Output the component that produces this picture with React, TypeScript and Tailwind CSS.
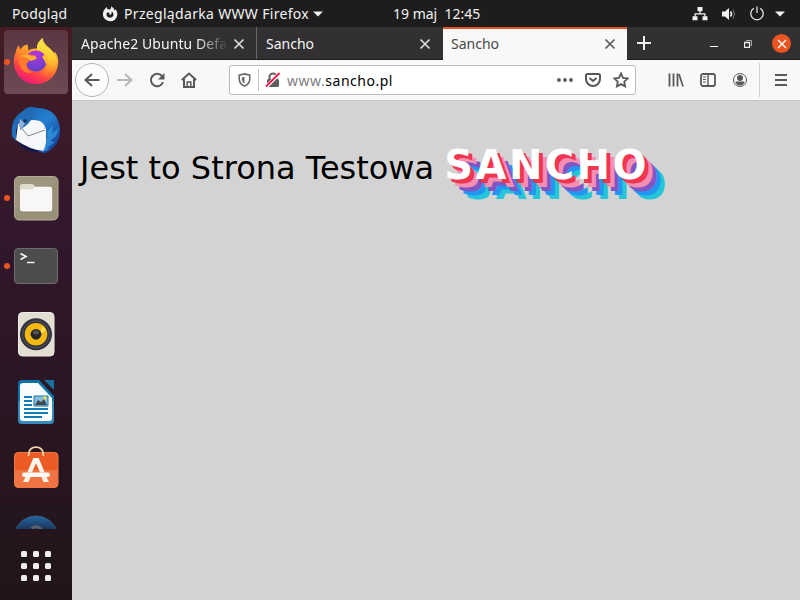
import React from "react";

const ui = "font-['Noto_Sans','Open_Sans',sans-serif]";

function Cross({ className = "" }: { className?: string }) {
  return (
    <svg viewBox="0 0 12 12" className={`size-3 shrink-0 ${className}`} fill="none" stroke="currentColor" strokeWidth="1.7">
      <path d="M1.5 1.5l9 9M10.5 1.5l-9 9" />
    </svg>
  );
}

function TopBar() {
  return (
    <header className="flex h-[27px] w-full shrink-0 items-center bg-[#1d1d1d] text-[14px] leading-[27px] whitespace-nowrap text-[#f2f2f2]">
      <div className="w-[103px] pl-3 tracking-[0.15px]">Podgląd</div>
      <svg viewBox="0 0 16 16" className="-ml-px size-4 shrink-0" fill="#f2f2f2">
        <path fillRule="evenodd" d="M4.6 1 2.9 2.900A7.300 7.300 0 1 0 13.600 3.200L12.800 4.500A7 7 0 0 0 9 .2C9.500 1.500 8.800 2.500 8.200 3.400L5.500 3.200ZM5 6.500l3 .2-1.300 1.500 1.600.6c1.300-.5 1.600-1.700 1.200-3.300 1.800 1 2.500 2.900 1.600 4.500-1.300 2.200-4.500 2.300-6 .3-.8-1.200-.8-2.600-.1-3.800Z" />
      </svg>
      <div className="w-[184px] pl-[6px] tracking-[0.32px]">Przeglądarka WWW Firefox</div>
      <svg viewBox="0 0 10 6" className="ml-[11px] h-[6px] w-[10px] shrink-0" fill="#f2f2f2"><path d="M0 .5h10L5 5.5z" /></svg>
      <div className="ml-[70px] w-[299px] whitespace-pre">19 maj  12:45</div>
      <svg viewBox="0 0 16 14" className="h-[14px] w-4 shrink-0" fill="#f2f2f2">
        <path d="M5.5 0h5v4.2H8.6v2h4.9v3H15.5v4h-5v-4h1.800V7.4H3.7v1.8H5.500v4H.5v-4h2v-3h4.900v-2H5.5z" />
      </svg>
      <svg viewBox="0 0 16 16" className="ml-[13px] size-4 shrink-0" fill="none" stroke="#f2f2f2">
        <path d="M1 5.500h3L8 2v12l-4-3.500H1z" fill="#f2f2f2" stroke="none" />
        <path d="M9.500 5.500q2 2.500 0 5" strokeWidth="1.500" />
        <path d="M12 3.500q3 4.500 0 9" stroke="#777" />
      </svg>
      <svg viewBox="0 0 16 16" className="ml-3 size-4 shrink-0" fill="none" stroke="#eee" strokeWidth="1.2">
        <path d="M4.800 2.300a6.200 6.200 0 1 0 6.400 0M8 .5v6.500" />
      </svg>
      <svg viewBox="0 0 10 6" className="ml-[10px] h-[6px] w-[10px] shrink-0" fill="#f2f2f2"><path d="M0 .5h10L5 5.5z" /></svg>
    </header>
  );
}

function DockCell({ children, running, active }: { children: React.ReactNode; running?: boolean; active?: boolean }) {
  return (
    <div className="relative h-16 w-full shrink-0 px-1">
      <div className={`size-16 rounded-[4px] ${active ? "bg-linear-to-b from-[#5a3640] to-[#6d4b54]" : ""}`}>
        <svg viewBox="0 0 64 64" className="size-16">{children}</svg>
      </div>
      {running && <span className="absolute top-[29px] left-1 size-[6px] rounded-full bg-[#e95420]" />}
    </div>
  );
}

function Dock() {
  return (
    <aside className="flex w-[72px] shrink-0 flex-col bg-linear-to-b from-[#451c24] via-[#32172d] via-35% to-[#211419]">
      <svg className="absolute size-0">
        <defs>
          <linearGradient id="fox" x1=".85" y1="0" x2=".35" y2="1"><stop offset="0" stopColor="#fff04b" /><stop offset=".35" stopColor="#ffb02c" /><stop offset=".58" stopColor="#ff7a2c" /><stop offset=".8" stopColor="#fb3a4c" /><stop offset="1" stopColor="#ee1a78" /></linearGradient>
          <linearGradient id="tail" x1="0" y1="0" x2="0" y2="1"><stop offset="0" stopColor="#f6e24e" /><stop offset=".5" stopColor="#ffd034" /><stop offset="1" stopColor="#ff8c2d" stopOpacity="0" /></linearGradient>
          <radialGradient id="globe" cx=".5" cy=".1" r=".9"><stop offset="0" stopColor="#b833e0" /><stop offset="1" stopColor="#6040c8" /></radialGradient>
          <linearGradient id="bird" x1="0" y1="0" x2="1" y2="1"><stop offset="0" stopColor="#165da5" /><stop offset=".5" stopColor="#2580d1" /><stop offset="1" stopColor="#102d88" /></linearGradient>
          <linearGradient id="help" x1="0" y1="0" x2="0" y2="1"><stop offset="0" stopColor="#2865a0" /><stop offset=".35" stopColor="#172c4e" /></linearGradient>
        </defs>
      </svg>
      <nav className="flex h-[502px] flex-col gap-1 overflow-hidden pt-[3px]">
        <DockCell active running>
          <path d="M11.500 23Q12.500 17 15 15.500L16 19.500 20 15.500 23.500 14.500 24.500 20.500Q27 18 33 18.500 33 12 38.500 8 39.500 14 46 18.500L50 23 51 22Q54.500 27 54.200 32A22.200 22.200 0 0 1 9.800 32Q9.800 26 11.500 23Z" fill="url(#fox)" />
          <path d="M38.500 8Q32 14 33 19q8 4 11 11-1 13-12 17 17 2 21-15-1-8-8-14-7-5-6.500-10Z" fill="url(#tail)" />
          <circle cx="32" cy="31" r="10.500" fill="url(#globe)" />
          <path d="M14 27q5-4 14-2 5 0 4 3-3 2-6 2-5 4-3 8 2 4 7 4-9 3-13-4-3-5-3-11Z" fill="#ff7a2c" />
          <path d="M15.500 26q7-3 12 0 6 0 5 3l-6 2q-3-4-11-5Z" fill="#ffae32" />
          <path d="m41 24 2 1q2 6-1 9-2-5-4-7Z" fill="#ffbd31" />
        </DockCell>
        <DockCell>
          <circle cx="33" cy="32" r="22.500" fill="#121949" />
          <path d="M8 38Q6 20 19 13q5-6 14-3 20 0 23 20 1 18-15 25l-7-1q8-4 9-14Q41 27 27 22L16 23q-5 5-4 20Z" fill="url(#bird)" />
          <path d="M14 26Q25 20 36 23q7 4 6 13 1 10-2 17-14-1-28-11Z" fill="#f5f7fb" />
          <path d="m15 27 9 11 17-6" fill="none" stroke="#84888f" strokeWidth="1" />
          <path d="M17 14q9-4 16 2-5 4-9 10l-8 6q0-7 1-18Z" fill="#216cb5" />
          <path d="m16 21 5 4-4 7q-3-5-1-11Z" fill="#8bb1d7" />
          <circle cx="21" cy="23" r="1.800" fill="#192b55" />
          <path d="m43 34 6-7-1 8 7-5-3 8-6 5 5 1-8 6 3 1-8 3q5-7 5-20Z" fill="#35a2e8" opacity=".65" />
        </DockCell>
        <DockCell running>
          <rect x="10.500" y="10.500" width="43.500" height="43.500" rx="4.500" fill="#999078" stroke="#b2ab97" />
          <path d="M11 15q0-4 4-4h34q4 0 4 4L24 42H11Z" fill="#a49d87" opacity=".45" />
          <path d="M16 25v-4.500q0-2.500 2.500-2.500H28q2 0 2.500 2l1 2H36v7H16Z" fill="#dedbcd" />
          <path d="M16 24h12l3-3h15q2.200 0 2.200 2.200V44q0 2.500-2.500 2.500h-27Q16 46.500 16 44Z" fill="#7b725e" opacity=".5" />
          <path d="M16 23.500h12l3-2.700h15q2.200 0 2.200 2.200v20q0 2.500-2.500 2.500h-27Q16 45.500 16 43Z" fill="#f8f7f5" />
        </DockCell>
        <DockCell running>
          <rect x="10.500" y="14.500" width="43" height="35" rx="3.500" fill="#4d4d4d" stroke="#6c6c6c" />
          <path d="m16.500 19.500 5.500 3-5.500 3" fill="none" stroke="#f4f4f4" strokeWidth="1.700" />
          <path d="M23 28.500h7.500" stroke="#f4f4f4" strokeWidth="1.500" />
        </DockCell>
        <DockCell>
          <rect x="14.500" y="10.500" width="35.500" height="43.500" rx="4" fill="#e2ded2" stroke="#f0ede6" />
          <circle cx="32" cy="32.300" r="16" fill="#32323d" />
          <circle cx="32" cy="32.300" r="13.500" fill="none" stroke="#555461" />
          <circle cx="32" cy="32.300" r="11.300" fill="#f1b912" />
          <path d="m38 24 4 4-6 5" fill="#fff06a" opacity=".7" />
          <circle cx="32" cy="32.300" r="5.400" fill="#252528" />
          <ellipse cx="32" cy="30.500" rx="3" ry="2" fill="#54545a" />
        </DockCell>
        <DockCell>
          <path d="M18 10h17l15 16v24q0 4-4 4H18q-4 0-4-4V14q0-4 4-4Z" fill="#0f71a8" />
          <path d="M14 31h36v19q0 4-4 4H18q-4 0-4-4Z" fill="#4d9cc9" opacity=".6" />
          <path d="M19 13h15l14 15v20q0 3-3 3H19q-3 0-3-3V16q0-3 3-3Z" fill="#fafcfd" />
          <path d="M40 10h10v10Z" fill="#166f9d" />
          <path d="M20 27h8M20 31h8M20 35h8M20 39h24M20 43h24M20 47h18" stroke="#127bb6" strokeWidth="1.800" />
          <path d="M30 26h14v10H30Z" fill="#86bedb" stroke="#1577ad" />
          <path d="m31 35 3-5 3 2 3-3 3 6Z" fill="#40484c" />
          <circle cx="41" cy="28" r="1.700" fill="#f1df53" />
        </DockCell>
        <DockCell>
          <rect x="10.500" y="14.500" width="43.500" height="35" rx="3.500" fill="#ed5b24" stroke="#f17a44" />
          <path d="M11 32h42.500v14q0 3.500-3.500 3.500H14.500Q11 49.500 11 46Z" fill="#f07343" />
          <path d="M24.700 18v-2.500q1-6.300 7.300-6.300t7.300 6.300V18" fill="none" stroke="#f4d6a8" strokeWidth="1.700" />
          <path d="M29.300 20h5.400l6 14.500h-4.500L32 25.500l-4.200 9h-4.500Z" fill="#fff5ec" />
          <rect x="18" y="34.500" width="28" height="4.600" rx="2.300" fill="#fff8f2" />
          <path d="M21.500 39h5l-2 5h-5.500ZM37.500 39h5l2.500 5h-5.500Z" fill="#fff3e9" />
        </DockCell>
        <DockCell>
          <circle cx="32" cy="32" r="22" fill="url(#help)" stroke="#356b99" strokeWidth=".8" />
          <path d="M27.500 22.500q5.500-4 10 1" fill="none" stroke="#60606c" strokeWidth="3" />
        </DockCell>
      </nav>
      <div className="mt-[22px] grid grid-cols-3 gap-[6px] self-center">
        {Array.from({ length: 9 }, (_, i) => <span key={i} className="size-[6px] rounded-[1.500px] bg-[#eeeeec]" />)}
      </div>
    </aside>
  );
}

function Tabs() {
  return (
    <div className="flex h-[33px] shrink-0 border-b border-[#1d1b1d] bg-[#323032] text-[14px] leading-[32px] text-[#f5f5f5]">
      <div className="flex w-[185px] items-center border-r border-[#69676a] pt-px pl-[9px]">
        <span className="w-[148px] mask-r-from-78% whitespace-nowrap tracking-[0.08px]">Apache2 Ubuntu Defa</span>
        <Cross className="ml-1 text-[#dedede]" />
      </div>
      <div className="flex w-[186px] items-center pt-px pl-[9px]">
        <span className="w-[153px]">Sancho</span><Cross className="text-[#dedede]" />
      </div>
      <div className="-mb-px flex h-[33px] w-[184px] items-center border-t-2 border-[#e95420] bg-[#f8f8f9] pb-px pl-2 text-[#48484a]">
        <span className="w-[153px]">Sancho</span><Cross className="text-[#5b5b5d]" />
      </div>
      <div className="flex flex-1 items-center text-[#efefef]">
        <svg viewBox="0 0 14 14" className="ml-[10px] size-[14px]" stroke="currentColor" strokeWidth="2"><path d="M7 0v14M0 7h14" /></svg>
        <span className="mt-[7px] ml-[59px] h-px w-2 bg-white" />
        <svg viewBox="0 0 8 8" className="mt-px ml-[26px] size-2" fill="none" stroke="currentColor"><path d="M.5 2.500h5v5h-5z" strokeWidth="1.300" /><path d="M2 .5h5.500V6" stroke="#aaa" /></svg>
        <span className="mt-px ml-5 flex size-[19px] items-center justify-center rounded-full bg-[#e95420]">
          <svg viewBox="0 0 10 10" className="size-[10px]" stroke="white" strokeWidth="1.400"><path d="m1 1 8 8M9 1 1 9" /></svg>
        </span>
      </div>
    </div>
  );
}

function Icon({ children, className = "" }: { children: React.ReactNode; className?: string }) {
  return <svg viewBox="0 0 16 16" className={`size-4 shrink-0 ${className}`} fill="none" stroke="#58585a" strokeWidth="2">{children}</svg>;
}

function Toolbar() {
  return (
    <div className="flex h-[41px] shrink-0 items-center border-b border-[#c5c5c6] bg-[#f8f8f9]">
      <button className="ml-[3px] flex size-[34px] shrink-0 items-center justify-center rounded-full border border-[#b5b5b6] bg-[#fcfcfc]">
        <Icon><path d="M15.500 8H1.500M8 2 1.500 8 8 14" /></Icon>
      </button>
      <Icon className="ml-2"><path d="M0 8h14.500M8 2 14.500 8 8 14" stroke="#b7b7b8" /></Icon>
      <Icon className="ml-4"><path d="M13 4.200A6.200 6.200 0 1 0 14 10" /><path d="M15.500 1v6.500H9Z" fill="#58585a" stroke="none" /></Icon>
      <Icon className="ml-4"><path d="m.8 8 7.200-6.500L15.200 8M3 7v8h10V7" /><path d="M6.200 14v-4h3.600v4" strokeWidth="1.500" /></Icon>
      <div className="ml-8 flex h-[30px] w-[407px] shrink-0 items-center rounded-[3px] border border-[#bdbdbe] bg-white">
        <svg viewBox="0 0 14 16" className="ml-2 h-[14px] w-[13px] shrink-0" fill="none" stroke="#68686a" strokeWidth="1.800"><path d="M7 1 13 2.500V7q0 5-6 8-6-3-6-8V2.500Z" /><path d="M7 4.200v8q-3-2-3-5V5Z" fill="#68686a" stroke="none" /></svg>
        <span className="ml-[7px] h-[22px] w-px bg-[#c4c4c5]" />
        <svg viewBox="0 0 16 16" className="ml-[6px] size-4 shrink-0"><path d="M4.500 7V5a3.500 3.500 0 0 1 7 0v2" fill="none" stroke="#5f5f61" strokeWidth="2" /><rect x="2" y="7" width="12" height="8" rx="1.500" fill="#5f5f61" /><path d="m1.500 14.500 13-13" stroke="white" strokeWidth="3.500" /><path d="m1 14.500 13.500-13.500" stroke="#ed1746" strokeWidth="1.800" /></svg>
        <span className="ml-[6px] w-[270px] pt-px text-[14px] tracking-[0.52px] text-black"><span className="text-[#818183]">www.</span>sancho.pl</span>
        <Icon><g fill="#58585a" stroke="none"><circle cx="2" cy="8" r="1.900" /><circle cx="8" cy="8" r="1.900" /><circle cx="14" cy="8" r="1.900" /></g></Icon>
        <Icon className="ml-3"><path d="M2.500 2h11Q15 2 15 3.500V7A7 7 0 0 1 1 7V3.500Q1 2 2.500 2Z" /><path d="m4.500 6 3.500 3 3.500-3" /></Icon>
        <Icon className="ml-3"><path d="m8 1.500 2 4.300 4.700.6-3.500 3.300.9 4.700L8 12.100l-4.100 2.300.9-4.700L1.300 6.400 6 5.800Z" strokeWidth="1.800" /></Icon>
      </div>
      <Icon className="ml-8"><path d="M2 1.500v13M6 1.500v13M10 1.500v13" strokeWidth="1.800" transform="translate(-.5)" /><path d="m11 2 4 12.500" strokeWidth="1.700" /></Icon>
      <Icon className="ml-4"><rect x="1" y="2" width="14" height="12" rx="2" strokeWidth="1.800" /><path d="M8 2v12" strokeWidth="1.400" /><path d="M3 5h3M3 7.500h3M3 10h3" strokeWidth="1" /></Icon>
      <Icon className="ml-4"><circle cx="8" cy="8" r="6.500" strokeWidth="1" /><circle cx="8" cy="6" r="3" fill="#58585a" stroke="none" /><path d="M3.500 9.500h9q-.5 4-4.500 4t-4.500-4Z" fill="#58585a" stroke="none" /></Icon>
      <span className="ml-[11px] h-[34px] w-px bg-[#d0d0d1]" />
      <svg viewBox="0 0 12 12" className="ml-[15px] size-3" stroke="#58585a" strokeWidth="2"><path d="M0 1h12M0 6h12M0 11h12" /></svg>
    </div>
  );
}

export default function App() {
  return (
    <div className={`flex h-[600px] w-[800px] flex-col overflow-hidden ${ui}`}>
      <TopBar />
      <div className="flex min-h-0 flex-1">
        <Dock />
        <main className="flex min-w-0 flex-1 flex-col bg-[#d3d3d3]">
          <Tabs />
          <Toolbar />
          <p className="mt-[40px] flex items-baseline pl-2 font-['DejaVu_Sans',sans-serif] text-[32px] leading-[48px] whitespace-pre text-black">
            <span>Jest to Strona Testowa </span>
            <strong className="text-[40px] font-bold tracking-[2.400px] text-white [text-shadow:4px_4px_#ef3550,8px_8px_#f48fb1,12px_12px_#7e57c2,16px_16px_#2196f3,20px_20px_#26c6da]">SANCHO</strong>
          </p>
        </main>
      </div>
    </div>
  );
}
